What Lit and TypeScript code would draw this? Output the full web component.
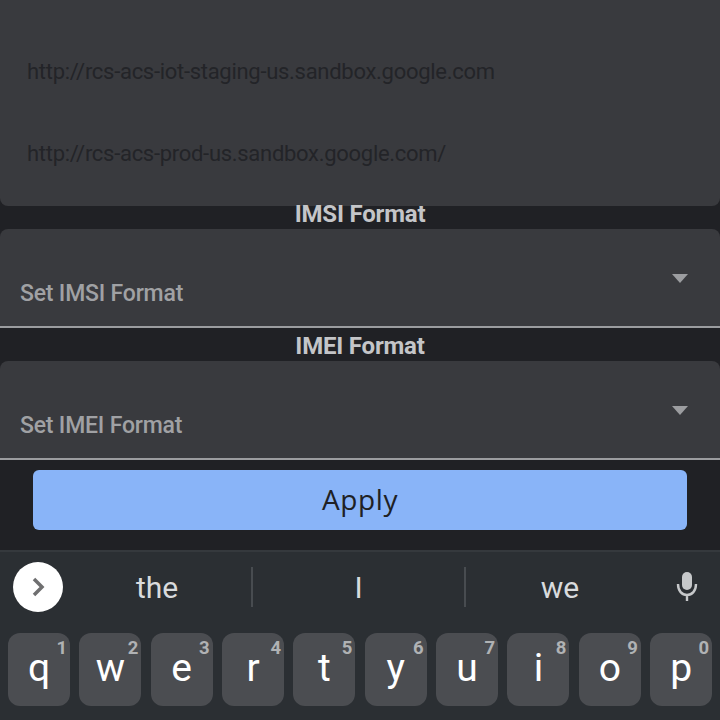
import { LitElement, html, css } from "lit";
import { customElement } from "lit/decorators.js";

const KEYS = [["q","1"],["w","2"],["e","3"],["r","4"],["t","5"],["y","6"],["u","7"],["i","8"],["o","9"],["p","0"]];

@customElement("app-root")
export class AppRoot extends LitElement {
  static styles = css`
    :host { display: block; width: 720px; height: 720px; overflow: hidden; background: #202125; font-family: Roboto, "Noto Sans", sans-serif; }
    .page { height: 720px; display: flex; flex-direction: column; }
    .urls { height: 206px; flex: none; background: #393a3e; border-radius: 0 0 8px 8px; overflow: hidden; display: flex; flex-direction: column; justify-content: flex-end; }
    .url { height: 82px; flex: none; display: flex; align-items: center; padding-left: 27px; font-size: 22px; letter-spacing: -0.29px; color: #232428; }
    .url.first { margin-bottom: 2px; }
    .urls .tail { height: 12px; flex: none; }
    .label { flex: none; display: flex; align-items: center; justify-content: center; font-size: 24px; font-weight: 700; letter-spacing: -0.2px; line-height: 20px; color: #c4c5c8; box-sizing: border-box; }
    .imsi { height: 23px; padding-bottom: 7px; }
    .imei { height: 33px; padding-top: 3px; }
    .select { height: 99px; flex: none; box-sizing: border-box; background: #393a3e; border-radius: 8px 8px 0 0; border-bottom: 2px solid #9b9c9f; display: flex; justify-content: space-between; padding: 51px 32px 0 20px; }
    .select span { font-size: 23px; font-weight: 500; letter-spacing: -0.2px; line-height: 28px; color: #a0a1a4; }
    .select svg { width: 16px; height: 9px; margin-top: -6px; fill: #9c9da0; }
    .gap { height: 10px; flex: none; }
    .apply-row { height: 60px; flex: none; padding: 0 33px; }
    .apply { box-sizing: border-box; width: 100%; height: 60px; border: 0; border-radius: 6px; background: #89b4f8; color: #202124; font: 500 28px "Open Sans", sans-serif; letter-spacing: 0.6px; display: flex; align-items: center; justify-content: center; padding: 0 0 2px; }
    .kb { margin-top: 20px; flex: 1; background: #2b2f33; border-top: 2px solid #35393d; }
    .suggest { box-sizing: border-box; height: 81px; padding-bottom: 11px; display: flex; align-items: center; }
    .go { width: 50px; height: 50px; margin-left: 13px; border-radius: 50%; background: #fff; display: flex; align-items: center; justify-content: center; flex: none; }
    .go svg { width: 16px; height: 20px; fill: none; stroke: #6f6f70; stroke-width: 3.5; }
    .word { font-size: 30px; color: #d9dbdd; text-align: center; flex: none; height: 40px; line-height: 42px; }
    .w1 { width: 188px; border-right: 2px solid #484c50; }
    .w2 { width: 211px; border-right: 2px solid #484c50; }
    .w3 { width: 188px; }
    .mic { width: 24px; height: 32px; flex: none; margin-left: 21px; }
    .keys { display: grid; grid-template-columns: repeat(10, 62px); column-gap: 9.35px; padding-left: 8px; }
    .key { height: 73px; border-radius: 12px; background: #4b4d51; position: relative; display: flex; justify-content: center; color: #fff; font-size: 39px; line-height: 71px; }
    .key sup { position: absolute; top: 3px; right: 3px; font-size: 18.5px; line-height: 24px; font-weight: 700; color: #b0b2b4; }
  `;

  render() {
    return html`<div class="page">
      <section class="urls">
        <div class="url first">http://rcs-acs-tmo-us.sandbox.google.com</div>
        <div class="url">http://rcs-acs-iot-staging-us.sandbox.google.com</div>
        <div class="url">http://rcs-acs-prod-us.sandbox.google.com/</div>
        <div class="tail"></div>
      </section>
      <div class="label imsi">IMSI Format</div>
      ${this.select("Set IMSI Format")}
      <div class="label imei">IMEI Format</div>
      ${this.select("Set IMEI Format")}
      <div class="gap"></div>
      <div class="apply-row"><button class="apply">Apply</button></div>
      <div class="kb">
        <div class="suggest">
          <div class="go"><svg viewBox="0 0 16 20"><path d="M4 2l8 8-8 8"/></svg></div>
          <div class="word w1">the</div>
          <div class="word w2">I</div>
          <div class="word w3">we</div>
          <svg class="mic" viewBox="0 0 24 32">
            <rect x="7" y="1" width="10" height="18" rx="5" fill="#c6c8ca"/>
            <path d="M3 13c0 7 4 11 9 11s9-4 9-11M12 24v6" fill="none" stroke="#c6c8ca" stroke-width="2.4"/>
          </svg>
        </div>
        <div class="keys">
          ${KEYS.map(([k, n]) => html`<div class="key">${k}<sup>${n}</sup></div>`)}
        </div>
      </div>
    </div>`;
  }

  select(text: string) {
    return html`<div class="select"><span>${text}</span><svg viewBox="0 0 16 9"><path d="M0 0h16l-8 9z"/></svg></div>`;
  }
}
